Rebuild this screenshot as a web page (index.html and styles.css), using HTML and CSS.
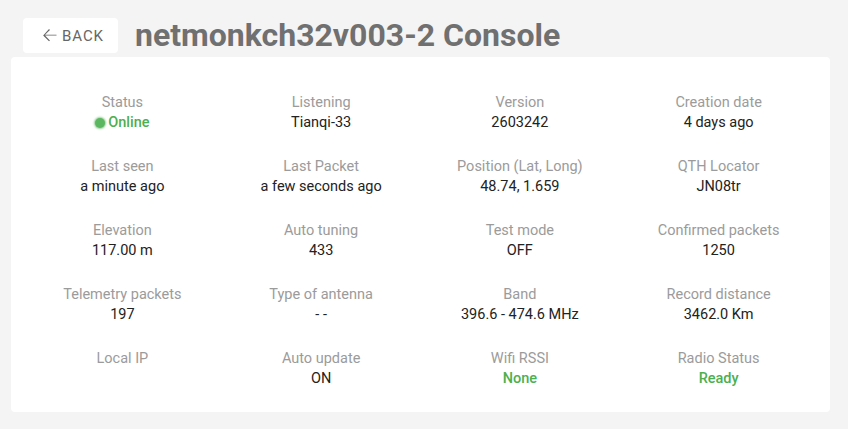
FILE: index.html
```html
<!DOCTYPE html>
<html>
<head>
<meta charset="utf-8">
<link rel="stylesheet" href="styles.css">
</head>
<body>
<div class="page">
  <header class="top">
    <button class="back"><svg class="arrow" viewBox="0 0 24 24" width="21" height="21"><path d="M20 11.2H6.9l5.6-5.6-1.05-1.05L4.75 12l6.7 6.7 1.05-1.05-5.6-5.6H20z" fill="currentColor"/></svg><span>Back</span></button>
    <h1 class="title">netmonkch32v003-2 Console</h1>
  </header>
  <section class="card">
    <div class="grid">
      <div class="cell"><div class="label">Status</div><div class="value ok"><span class="dot"></span>Online</div></div>
      <div class="cell"><div class="label">Listening</div><div class="value">Tianqi-33</div></div>
      <div class="cell"><div class="label">Version</div><div class="value">2603242</div></div>
      <div class="cell"><div class="label">Creation date</div><div class="value">4 days ago</div></div>

      <div class="cell"><div class="label">Last seen</div><div class="value">a minute ago</div></div>
      <div class="cell"><div class="label">Last Packet</div><div class="value">a few seconds ago</div></div>
      <div class="cell"><div class="label">Position (Lat, Long)</div><div class="value">48.74, 1.659</div></div>
      <div class="cell"><div class="label">QTH Locator</div><div class="value">JN08tr</div></div>

      <div class="cell"><div class="label">Elevation</div><div class="value">117.00 m</div></div>
      <div class="cell"><div class="label">Auto tuning</div><div class="value">433</div></div>
      <div class="cell"><div class="label">Test mode</div><div class="value">OFF</div></div>
      <div class="cell"><div class="label">Confirmed packets</div><div class="value">1250</div></div>

      <div class="cell"><div class="label">Telemetry packets</div><div class="value">197</div></div>
      <div class="cell"><div class="label">Type of antenna</div><div class="value">- -</div></div>
      <div class="cell"><div class="label">Band</div><div class="value">396.6 - 474.6 MHz</div></div>
      <div class="cell"><div class="label">Record distance</div><div class="value">3462.0 Km</div></div>

      <div class="cell"><div class="label">Local IP</div><div class="value"></div></div>
      <div class="cell"><div class="label">Auto update</div><div class="value">ON</div></div>
      <div class="cell"><div class="label">Wifi RSSI</div><div class="value ok">None</div></div>
      <div class="cell"><div class="label">Radio Status</div><div class="value ok">Ready</div></div>
    </div>
  </section>
</div>
</body>
</html>
```

FILE: styles.css
```css
html, body {
  margin: 0;
  padding: 0;
  background: #f4f4f4;
  font-family: Roboto, "Liberation Sans", sans-serif;
}
.page {
  padding: 18px 18px 18px 11px;
  width: 819px;
}
.top {
  display: flex;
  align-items: center;
  margin-left: 12px;
  height: 35px;
  margin-bottom: 4px;
}
.back {
  display: flex;
  align-items: center;
  justify-content: center;
  gap: 2px;
  width: 95px;
  height: 35px;
  background: #fff;
  border: none;
  border-radius: 4px;
  color: #666;
  font-family: Roboto, "Liberation Sans", sans-serif;
  font-size: 15px;
  font-weight: 400;
  text-transform: uppercase;
  letter-spacing: 0.9px;
  padding: 0 0 0 2px;
}
.title {
  margin: 0 0 0 17px;
  font-size: 32px;
  font-weight: 700;
  color: #707070;
  line-height: 35px;
}
.card {
  background: #fff;
  border-radius: 4px;
  padding: 24px 12px 11px;
}
.grid {
  display: grid;
  grid-template-columns: repeat(4, 1fr);
}
.cell {
  padding: 12px 0;
  text-align: center;
  line-height: 20px;
  font-size: 14.5px;
}
.label { color: #9b9b9b; }
.value { color: #222; min-height: 20px; }
.value.ok { color: #4caf50; font-weight: 500; }
.dot {
  display: inline-block;
  width: 10px;
  height: 10px;
  border-radius: 50%;
  background: #5cb860;
  box-shadow: 0 0 2px 1px rgba(76,175,80,0.6);
  margin-right: 3px;
  vertical-align: -1px;
}
```
